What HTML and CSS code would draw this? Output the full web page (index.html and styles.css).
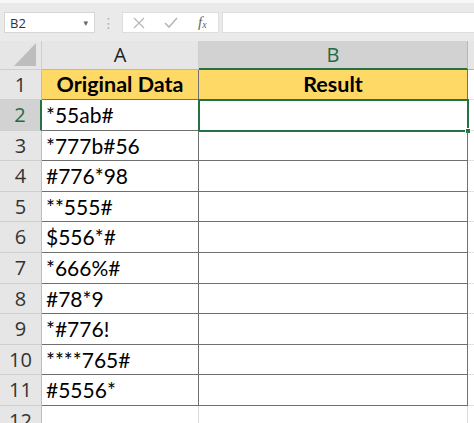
FILE: index.html
```html
<!DOCTYPE html>
<html>
<head>
<meta charset="utf-8">
<link rel="stylesheet" href="styles.css">
</head>
<body>
<div class="app">
  <div class="formulabar">
    <div class="namebox"><span>B2</span><span class="caret">▾</span></div>
    <div class="grip">⋮</div>
    <div class="fxbox">
      <svg class="ico" width="14" height="14" viewBox="0 0 14 14"><path d="M2 2 L12 12 M12 2 L2 12" stroke="#b8b8b8" stroke-width="1.3" fill="none"/></svg>
      <svg class="ico" width="16" height="14" viewBox="0 0 16 14"><path d="M2 7 L6 11 L14 2" stroke="#b8b8b8" stroke-width="1.6" fill="none"/></svg>
      <span class="fx">f<sub>x</sub></span>
    </div>
    <div class="input"></div>
  </div>
  <div class="sheet">
    <div class="corner"><svg width="38" height="30" viewBox="0 0 38 30"><path d="M36 4 L36 27 L14 27 Z" fill="#bdbdbd"/></svg></div>
    <div class="colhead">A</div>
    <div class="colhead sel">B</div>
    <div class="colhead c"></div>

    <div class="rowhead">1</div>
    <div class="cell hdr a">Original Data</div>
    <div class="cell hdr b">Result</div>
    <div class="gc"></div>

    <div class="rowhead sel">2</div>
    <div class="cell a">*55ab#</div>
    <div class="cell b active"><span class="handle"></span></div>
    <div class="gc"></div>

    <div class="rowhead">3</div>
    <div class="cell a">*777b#56</div>
    <div class="cell b"></div>
    <div class="gc"></div>

    <div class="rowhead">4</div>
    <div class="cell a">#776*98</div>
    <div class="cell b"></div>
    <div class="gc"></div>

    <div class="rowhead">5</div>
    <div class="cell a">**555#</div>
    <div class="cell b"></div>
    <div class="gc"></div>

    <div class="rowhead">6</div>
    <div class="cell a">$556*#</div>
    <div class="cell b"></div>
    <div class="gc"></div>

    <div class="rowhead">7</div>
    <div class="cell a">*666%#</div>
    <div class="cell b"></div>
    <div class="gc"></div>

    <div class="rowhead">8</div>
    <div class="cell a">#78*9</div>
    <div class="cell b"></div>
    <div class="gc"></div>

    <div class="rowhead">9</div>
    <div class="cell a">*#776!</div>
    <div class="cell b"></div>
    <div class="gc"></div>

    <div class="rowhead">10</div>
    <div class="cell a">****765#</div>
    <div class="cell b"></div>
    <div class="gc"></div>

    <div class="rowhead">11</div>
    <div class="cell a">#5556*</div>
    <div class="cell b"></div>
    <div class="gc"></div>

    <div class="rowhead">12</div>
    <div class="cell e"></div>
    <div class="cell e"></div>
    <div class="gc"></div>
  </div>
</div>
</body>
</html>
```
FILE: styles.css
```css
* { box-sizing: border-box; }
html, body { margin: 0; padding: 0; }
body { width: 474px; height: 423px; overflow: hidden; background: #fff; }
.app { width: 474px; height: 423px; overflow: hidden; }

.formulabar {
  height: 41px;
  background: #eaeaea;
  border-top: 3px solid #f7f7f7;
  display: flex;
  align-items: flex-start;
  padding-top: 9px;
  padding-left: 4px;
  font-family: "Open Sans", "DejaVu Sans", sans-serif;
}
.namebox {
  width: 91px; height: 21px;
  background: #fff;
  border: 1px solid #d6d6d6;
  display: flex; align-items: center; justify-content: space-between;
  padding: 0 6px 0 5px;
  font-size: 13px; color: #333;
}
.caret { font-size: 9px; color: #666; }
.grip { width: 27px; text-align: center; color: #b0b0b0; font-size: 14px; line-height: 21px; }
.fxbox {
  width: 97px; height: 21px;
  background: #fff;
  border: 1px solid #dedede;
  display: flex; align-items: center;
  padding-left: 9px;
  gap: 17px;
}
.fx { font-family: "Liberation Serif", serif; font-style: italic; font-size: 15px; color: #666; margin-left: 2px; }
.fx sub { font-size: 10px; vertical-align: -1px; }
.input {
  margin-left: 3px; flex: 1; height: 21px;
  background: #fff; border: 1px solid #dedede; border-right: none;
}

.sheet {
  display: grid;
  grid-template-columns: 42px 157px 269px 1fr;
  grid-template-rows: 29px 30px repeat(11, 30.6px);
  font-family: Lato, "Open Sans", sans-serif;
}
.corner { background: #e6e6e6; border-right: 1px solid #cfcfcf; border-bottom: 1px solid #cfcfcf; display: flex; align-items: flex-end; }
.colhead {
  background: #e6e6e6;
  border-right: 1px solid #cfcfcf;
  border-bottom: 1px solid #b8b8b8;
  text-align: center;
  font-family: "Open Sans", sans-serif;
  font-size: 20px; line-height: 28px; color: #222;
}
.colhead.sel { background: #d2d2d2; color: #1e6b45; border-bottom: 2px solid #217346; border-right-color: #b8b8b8; }
.colhead.c { border-right: none; }

.rowhead {
  background: #e6e6e6;
  border-right: 1px solid #bdbdbd;
  border-bottom: 1px solid #cfcfcf;
  text-align: center;
  font-family: "Open Sans", sans-serif;
  font-size: 20px; line-height: 29px; color: #333;
}
.rowhead.sel { background: #d2d2d2; color: #1e6b45; border-right: 2px solid #217346; }

.cell {
  border-right: 1px solid #6f6f6f;
  border-bottom: 1px solid #6f6f6f;
  font-size: 21px; line-height: 29px; color: #000;
  padding-left: 4px;
  white-space: nowrap;
  position: relative;
}
.cell.hdr { background: #ffd966; font-weight: bold; text-align: center; padding-left: 0; font-size: 21.5px; }
.cell.e { border-right: 1px solid #dadada; border-bottom: 1px solid #dadada; }
.gc { border-bottom: 1px solid #e2e2e2; }

.cell.active { outline: 2px solid #217346; outline-offset: -1px; }
.handle {
  position: absolute; right: -4px; bottom: -4px;
  width: 6px; height: 6px; background: #217346; border: 1px solid #fff;
}
```
